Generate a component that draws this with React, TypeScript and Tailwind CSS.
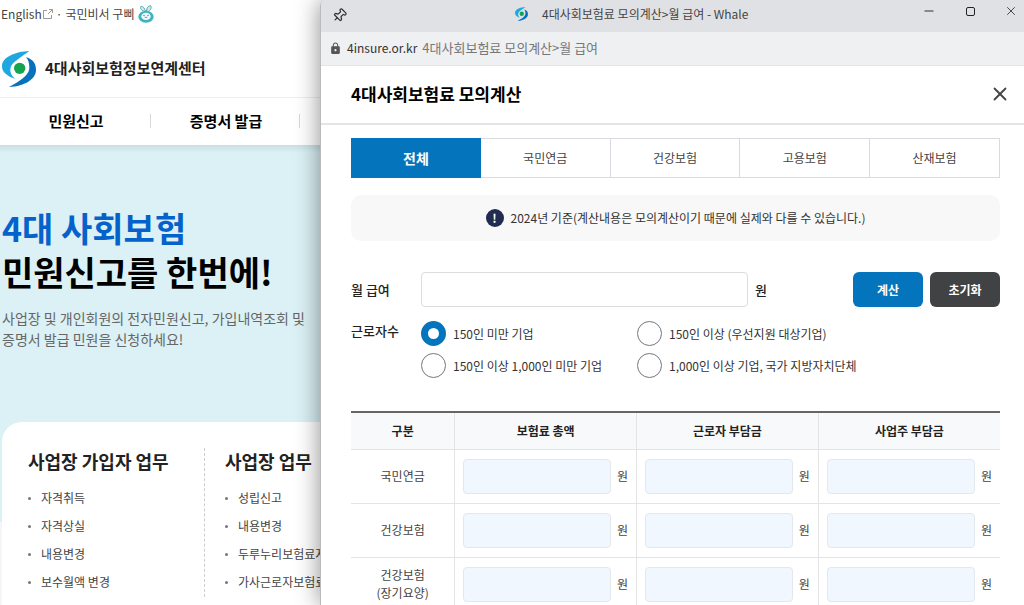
import React, { useState } from "react";
import { Minus, Pin, X } from "lucide-react";
import { MdLock } from "react-icons/md";

const TABS = ["전체", "국민연금", "건강보험", "고용보험", "산재보험"];

const COMPANY_SIZES = [
  "150인 미만 기업",
  "150인 이상 (우선지원 대상기업)",
  "150인 이상 1,000인 미만 기업",
  "1,000인 이상 기업, 국가 지방자치단체",
];

const COLUMNS = ["보험료 총액", "근로자 부담금", "사업주 부담금"];

const ROWS = [["국민연금"], ["건강보험"], ["건강보험", "(장기요양)"]];

const TASKS = [
  {
    title: "사업장 가입자 업무",
    links: ["자격취득", "자격상실", "내용변경", "보수월액 변경"],
  },
  {
    title: "사업장 업무",
    links: ["성립신고", "내용변경", "두루누리보험료지원", "가사근로자보험료지원"],
  },
];

function Logo({ className }: { className?: string }) {
  return (
    <svg viewBox="0 0 102 108" className={className} aria-hidden="true">
      <path
        d="M82 0C40 2 0 18 0 46c0 18 16 30 40 38C26 72 22 60 27 46 34 32 58 18 82 0Z"
        fill="#1fa8e0"
      />
      <path
        d="M72 19c22 6 30 20 30 37C102 84 70 105 21 108 50 92 80 76 82 52 82 38 80 28 72 19Z"
        fill="#0672bd"
      />
      <circle cx="53" cy="52" r="17" fill="#16a34f" />
    </svg>
  );
}

function Mascot() {
  return (
    <svg viewBox="0 0 48 54" className="h-[18px] w-4" aria-hidden="true">
      <path
        d="M19 19C9 16 5 8 9 4c6-1 11 6 13 14ZM26 18c-1-9 4-15 12-16 4 6-1 14-7 18Z"
        fill="#c9efe4"
        stroke="#58a9b4"
        strokeWidth="3"
      />
      <ellipse cx="24" cy="35" rx="23" ry="18" fill="#3fb3c0" />
      <ellipse cx="24" cy="34" rx="14" ry="11" fill="#eefafa" />
      <circle cx="18" cy="31" r="2" fill="#35606b" />
      <circle cx="30" cy="31" r="2" fill="#35606b" />
      <path d="M20 36q4 4 8 0" fill="none" stroke="#35606b" strokeWidth="2" />
    </svg>
  );
}

function ExternalIcon() {
  return (
    <svg
      viewBox="0 0 10 10"
      className="size-[10px]"
      fill="none"
      stroke="#999"
      aria-hidden="true"
    >
      <path d="M4 1.5H.5v8h8V6M6 .5h3.5V4M9.5.5 5 5" />
    </svg>
  );
}

function MainPage() {
  return (
    <div className="flex min-h-screen flex-col overflow-hidden bg-[#f5f6f7]">
      <header className="bg-white">
        <div className="flex h-7 items-center gap-[3px] px-px text-xs text-[#444]">
          <a href="#english" className="flex items-center gap-px">
            English <ExternalIcon />
          </a>
          <span>·</span>
          <a href="#secretary" className="flex items-center gap-1">
            국민비서 구삐 <Mascot />
          </a>
        </div>
        <a
          href="#home"
          className="flex h-[70px] items-center gap-[9px] border-b border-[#eee] px-[2px] pt-3 text-[15px] font-bold text-[#222]"
        >
          <Logo className="h-9 w-[34px]" />
          4대사회보험정보연계센터
        </a>
        <nav className="flex h-[47px] items-center pb-[2px] text-[15px] font-bold text-black">
          <a
            href="#report"
            className="w-[151px] border-r border-[#d5d9dd] pl-[2px] text-center leading-[14px]"
          >
            민원신고
          </a>
          <a
            href="#certificate"
            className="w-[149px] border-r border-[#d5d9dd] pl-[2px] text-center leading-[14px]"
          >
            증명서 발급
          </a>
        </nav>
      </header>

      <main className="flex flex-1 flex-col bg-[linear-gradient(#c9dfe3_0px,#dbf1f5_8px,#dbf1f5_377px,#f5f6f7_377px)]">
        <section className="px-[2px] pt-[61px]">
          <h1 className="text-[34px] leading-[44px] font-bold text-black">
            <span className="block text-[#0562cb]">4대 사회보험</span>
            <span className="block">민원신고를 한번에!</span>
          </h1>
          <p className="mt-[14px] text-sm leading-[21px] text-[#666]">
            사업장 및 개인회원의 전자민원신고, 가입내역조회 및
            <br />
            증명서 발급 민원을 신청하세요!
          </p>
        </section>
        <section className="mt-[72px] ml-[2px] flex flex-1 rounded-tl-[20px] bg-white pt-[26px] pb-2">
          {TASKS.map((task) => (
            <div
              key={task.title}
              className="mr-5 w-[177px] border-r border-dashed border-[#ccc] first:w-[203px] first:pl-[26px]"
            >
              <h2 className="text-lg leading-[27px] font-bold whitespace-nowrap text-[#222]">
                {task.title}
              </h2>
              <ul className="mt-[9px] text-xs leading-7 whitespace-nowrap text-[#444]">
                {task.links.map((link) => (
                  <li key={link} className="flex items-center gap-[10px]">
                    <span className="size-[3px] rounded-full bg-[#777]" />
                    <a href="#task">{link}</a>
                  </li>
                ))}
              </ul>
            </div>
          ))}
        </section>
      </main>
    </div>
  );
}

function WindowBar() {
  return (
    <div className="bg-[#eff0f2]">
      <div className="flex h-8 items-center bg-[#e0e1e5] pr-[6px] pl-[11px] text-[#333]">
        <button type="button" aria-label="고정" className="w-[183px] pb-[2px]">
          <Pin className="size-[15px] rotate-45" strokeWidth={2} />
        </button>
        <div className="flex items-center gap-[14px] pb-1 text-xs whitespace-nowrap text-[#444]">
          <Logo className="h-[14px] w-[13px]" />
          4대사회보험료 모의계산&gt;월 급여 - Whale
        </div>
        <div className="ml-auto flex w-24 items-center justify-between pb-[10px]">
          <button type="button" aria-label="최소화">
            <Minus className="size-[14px]" strokeWidth={2} />
          </button>
          <button
            type="button"
            aria-label="최대화"
            className="size-[9px] rounded-[2px] border border-[#222]"
          />
          <button type="button" aria-label="닫기">
            <X className="size-[14px]" strokeWidth={1.5} />
          </button>
        </div>
      </div>
      <div className="flex h-[34px] items-center gap-[5px] border-b border-[#e4e5e7] px-2 pb-px text-[13px] text-[#777]">
        <MdLock className="size-[13px] text-[#555]" />
        <span className="text-xs text-[#333]">4insure.or.kr</span>
        4대사회보험료 모의계산&gt;월 급여
      </div>
    </div>
  );
}

function SalaryForm() {
  const [size, setSize] = useState(COMPANY_SIZES[0]);
  const [salary, setSalary] = useState("");

  return (
    <form
      className="mt-[31px] grid grid-cols-[70px_1fr] gap-y-[14px]"
      onSubmit={(e) => e.preventDefault()}
    >
      <label
        htmlFor="salary"
        className="self-center text-[13px] font-medium text-[#222]"
      >
        월 급여
      </label>
      <div className="flex items-center gap-[7px]">
        <input
          id="salary"
          value={salary}
          onChange={(e) => setSalary(e.target.value)}
          className="h-[35px] min-w-0 flex-1 rounded-[4px] border border-[#ddd] px-2 text-[13px]"
        />
        <span className="w-[91px] text-[13px] font-medium text-[#222]">원</span>
        <button
          type="submit"
          className="h-[35px] w-[70px] rounded-md bg-[#0475bc] text-xs font-bold text-white"
        >
          계산
        </button>
        <button
          type="reset"
          onClick={() => setSalary("")}
          className="h-[35px] w-[70px] rounded-md bg-[#414244] text-xs font-bold text-white"
        >
          초기화
        </button>
      </div>
      <span id="size-label" className="text-[13px] font-medium text-[#222]">
        근로자수
      </span>
      <div
        role="radiogroup"
        aria-labelledby="size-label"
        className="grid grid-cols-[216px_1fr] gap-y-[7px]"
      >
        {COMPANY_SIZES.map((label) => (
          <label
            key={label}
            className="flex items-center gap-[7px] text-xs whitespace-nowrap text-[#333]"
          >
            <input
              type="radio"
              name="size"
              checked={size === label}
              onChange={() => setSize(label)}
              className="size-[25px] shrink-0 appearance-none rounded-full border border-[#777] bg-white checked:border-[7px] checked:border-[#0475bc]"
            />
            {label}
          </label>
        ))}
      </div>
    </form>
  );
}

function ResultTable() {
  return (
    <table className="mt-[33px] w-full table-fixed border-t-2 border-[#666] text-xs text-[#444]">
      <thead>
        <tr className="h-[37px] border-b border-[#e4e4e4] bg-[#f8f9fb] text-[#222]">
          <th scope="col" className="w-[16%] font-bold">
            구분
          </th>
          {COLUMNS.map((column) => (
            <th
              key={column}
              scope="col"
              className="border-l border-[#e4e4e4] font-bold"
            >
              {column}
            </th>
          ))}
        </tr>
      </thead>
      <tbody>
        {ROWS.map((lines) => (
          <tr key={lines.join("")} className="h-[54px] border-b border-[#e4e4e4]">
            <th scope="row" className="leading-[18px] font-normal">
              {lines.map((line) => (
                <div key={line}>{line}</div>
              ))}
            </th>
            {COLUMNS.map((column) => (
              <td key={column} className="border-l border-[#e4e4e4] px-2">
                <label className="flex items-center gap-[6px]">
                  <input
                    readOnly
                    aria-label={`${lines.join(" ")} ${column}`}
                    className="h-[35px] min-w-0 flex-1 rounded-[4px] border border-[#e4e8ec] bg-[#f0f7ff] px-2 text-right"
                  />
                  원
                </label>
              </td>
            ))}
          </tr>
        ))}
      </tbody>
    </table>
  );
}

function CalculatorWindow() {
  const [tab, setTab] = useState(TABS[0]);

  return (
    <div className="absolute inset-y-0 right-0 left-80 overflow-hidden rounded-tl-md border-l border-[#bbb] bg-white shadow-[0_0_24px_rgba(0,0,0,0.45)]">
      <WindowBar />
      <div className="flex h-[59px] items-center justify-between border-b-2 border-[#e5e5e5] pr-[13px] pb-px pl-[30px]">
        <h2 className="text-[17px] font-bold text-black">
          4대사회보험료 모의계산
        </h2>
        <button type="button" aria-label="창 닫기" className="text-[#444]">
          <X className="size-[22px]" strokeWidth={2} />
        </button>
      </div>
      <div className="pt-[13px] pr-6 pl-[30px]">
        <div className="grid grid-cols-5">
          {TABS.map((name) => (
            <button
              key={name}
              type="button"
              onClick={() => setTab(name)}
              className={
                tab === name
                  ? "h-10 bg-[#0475bc] text-sm font-bold text-white"
                  : "h-10 border-y border-r border-[#d9dadf] text-xs text-[#444]"
              }
            >
              {name}
            </button>
          ))}
        </div>
        <p className="mt-[17px] flex h-[46px] items-center justify-center gap-[7px] rounded-[10px] bg-[#f8f8f8] text-xs text-[#333]">
          <span className="flex size-[18px] items-center justify-center rounded-full bg-[#212c50] text-xs font-bold text-white">
            !
          </span>
          2024년 기준(계산내용은 모의계산이기 때문에 실제와 다를 수 있습니다.)
        </p>
        <SalaryForm />
        <ResultTable />
      </div>
    </div>
  );
}

export default function App() {
  return (
    <div className="relative h-screen overflow-hidden font-['Noto_Sans_CJK_KR',sans-serif]">
      <MainPage />
      <CalculatorWindow />
    </div>
  );
}
